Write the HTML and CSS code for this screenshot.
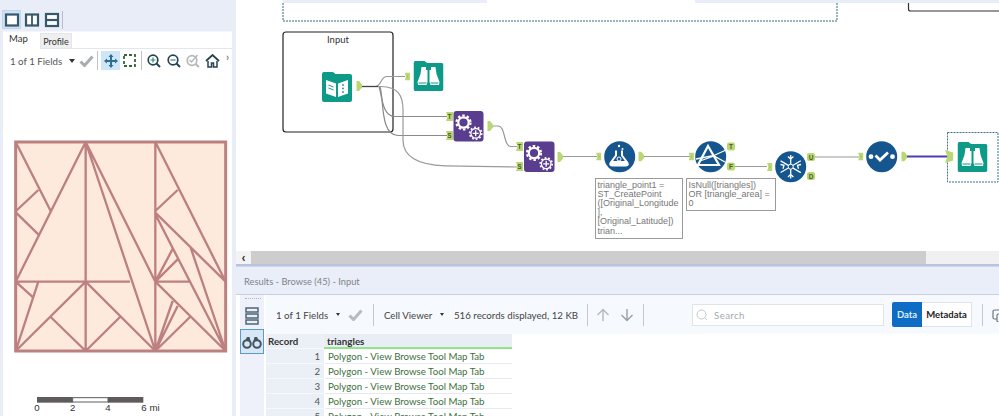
FILE: index.html
```html
<!DOCTYPE html>
<html lang="en">
<head>
<meta charset="utf-8">
<title>Results - Browse (45) - Input</title>
<link rel="stylesheet" href="styles.css">
</head>
<body>
<svg class="defs" width="0" height="0">
  <defs>
    <symbol id="folder" viewBox="0 0 30 30"><path fill="#0d9a88" d="M2 0H11L13.500 2H28a2 2 0 0 1 2 2V28a2 2 0 0 1-2 2H2a2 2 0 0 1-2-2V2a2 2 0 0 1 2-2z"/></symbol>
    <symbol id="bino" viewBox="0 0 30 30"><path fill="#fff" d="M8 6h4.500v3h1.500v12l-1 3H4.500L4 21l3-8zM22 6h-4.500v3H16v12l1 3h8.500l.5-3-3-8z"/><path fill="#0d9a88" d="M5 21.500h8v1H5zM17 21.500h8v1h-8z"/></symbol>
    <symbol id="gears" viewBox="0 0 30 30">
      <circle cx="10" cy="11.500" r="5.200" fill="none" stroke="#fff" stroke-width="2.200"/>
      <circle cx="10" cy="11.500" r="7" fill="none" stroke="#fff" stroke-width="2.200" stroke-dasharray="2.500 2"/>
      <circle cx="22.200" cy="22.300" r="7.200" fill="#5a3d8e"/>
      <circle cx="22.200" cy="22.300" r="4.800" fill="none" stroke="#fff" stroke-width="1.300"/>
      <circle cx="22.200" cy="22.300" r="6" fill="none" stroke="#fff" stroke-width="1.700" stroke-dasharray="1.800 1.900"/>
      <path d="M22.200 19.300v6M19.200 22.300h6" stroke="#fff" stroke-width="1.300"/>
    </symbol>
    <symbol id="in" viewBox="0 0 6 9"><path fill="#b9d772" d="M0 0H6V9H0L1.500 4.500z"/><path d="M2.500 3.500l1.500 1-1.500 1" fill="none" stroke="#8fae50" stroke-width=".6"/></symbol>
    <symbol id="out" viewBox="0 0 6 10"><path fill="#b9d772" d="M.500 0H3L6 3.500V6.500L3 10H.500z"/></symbol>
  </defs>
</svg>
<div class="app">
  <aside class="side">
    <div class="layouts">
      <button class="lbtn on"><svg width="16" height="16" viewBox="0 0 16 16"><rect x="2" y="2.500" width="12" height="11" fill="#fff" stroke="#36586a" stroke-width="2.200"/></svg></button>
      <button class="lbtn"><svg width="16" height="16" viewBox="0 0 16 16"><rect x="2" y="2.500" width="12" height="11" fill="#fff" stroke="#36586a" stroke-width="2.200"/><path d="M8 2.500v11" stroke="#36586a" stroke-width="1.800"/></svg></button>
      <button class="lbtn"><svg width="16" height="16" viewBox="0 0 16 16"><rect x="2" y="2" width="12" height="12" fill="#fff" stroke="#36586a" stroke-width="2.200"/><path d="M2 8h12" stroke="#36586a" stroke-width="2.200"/></svg></button>
      <span class="lsep"></span>
    </div>
    <div class="panel">
      <div class="tabs"><span class="tab active">Map</span><span class="tab">Profile</span></div>
      <div class="maptools">
        <span class="fields">1 of 1 Fields</span>
        <span class="caret"></span>
        <svg class="ico check" width="15" height="12" viewBox="0 0 15 12"><path d="M1.500 6.500l4 4 8-9" fill="none" stroke="#a9adb0" stroke-width="3"/></svg>
        <span class="vsep"></span>
        <span class="movebtn"><svg width="14" height="14" viewBox="0 0 14 14"><path fill="#2c6f90" d="M7 0l2.500 3H8v3h3V4.500L14 7l-3 2.500V8H8v3h1.500L7 14l-2.500-3H6V8H3v1.500L0 7l3-2.500V6h3V3H4.500z"/></svg></span>
        <svg class="ico" width="13" height="13" viewBox="0 0 13 13"><rect x="1" y="1" width="11" height="11" fill="none" stroke="#2f6a3c" stroke-width="1.800" stroke-dasharray="3 2"/></svg>
        <span class="vsep second"></span>
        <svg class="ico first" width="14" height="14" viewBox="0 0 14 14"><circle cx="6" cy="6" r="4.800" fill="none" stroke="#27434f" stroke-width="1.700"/><path d="M9.500 9.500L13 13" stroke="#27434f" stroke-width="2"/><path d="M3.500 6h5M6 3.500v5" stroke="#2c8a7a" stroke-width="1.200"/></svg>
        <svg class="ico gap6" width="14" height="14" viewBox="0 0 14 14"><circle cx="6" cy="6" r="4.800" fill="none" stroke="#27434f" stroke-width="1.700"/><path d="M9.500 9.500L13 13" stroke="#27434f" stroke-width="2"/><path d="M3.500 6h5" stroke="#2c8a7a" stroke-width="1.200"/></svg>
        <svg class="ico gap5" width="14" height="14" viewBox="0 0 14 14"><circle cx="6" cy="6.500" r="4.800" fill="none" stroke="#b5b8ba" stroke-width="1.700"/><path d="M9.500 10L13 13" stroke="#b5b8ba" stroke-width="2"/><path d="M3.500 6l2 2 6-7" fill="none" stroke="#b5b8ba" stroke-width="1.500"/></svg>
        <svg class="ico gap5" width="15" height="14" viewBox="0 0 15 14"><path d="M1 7l6.500-6L14 7" fill="none" stroke="#27434f" stroke-width="1.800"/><path d="M3 7v6h3.500V9h2v4H12V7" fill="none" stroke="#27434f" stroke-width="1.500"/></svg>
        <span class="more">›</span>
      </div>
      <svg class="map" width="229" height="286" viewBox="9 0 687 858">
        <rect x="47" y="33" width="630" height="627" fill="#fdeadd" stroke="#bd8080" stroke-width="9"/>
        <path fill="none" stroke="#bd8080" stroke-width="7" d="M257 33V660M466 33V660M47 452H390M466 452H570M47 33L152 240M115 177L48 240M48 245L115 310M257 33L47 452M47 452L100 500M115 452L47 660M47 660L257 452L466 660M152 558L257 660M360 558L257 660M257 33L466 452M257 33L466 660M466 33L677 452M533 177L466 240M466 245L677 452M466 250L677 660M520 350L466 452M533 385L466 452M572 350L677 660M466 452L677 660M518 510L466 660M533 525L466 660M570 558L466 660"/>
        <rect x="111" y="798" width="107" height="17" fill="#5f5a5c"/>
        <rect x="218" y="800" width="106" height="13" fill="#fff" stroke="#5f5a5c" stroke-width="3"/>
        <rect x="324" y="798" width="106" height="17" fill="#5f5a5c"/>
        <g class="scale">
          <text x="111" y="840" text-anchor="middle">0</text>
          <text x="218" y="840" text-anchor="middle">2</text>
          <text x="324" y="840" text-anchor="middle">4</text>
          <text x="424" y="840">6 mi</text>
        </g>
      </svg>
    </div>
  </aside>
  <main class="main">
    <div class="canvas">
      <svg class="flow" width="763" height="251" viewBox="236 0 763 251">
        <rect x="283" y="0" width="204" height="3" fill="#e9edf7"/>
        <rect x="695" y="0" width="304" height="3" fill="#e9edf7"/>
        <path d="M283 3V21H837V3" fill="none" stroke="#2f6f78" stroke-width="1" stroke-dasharray="2 1"/>
        <path d="M908.500 3V9a2 2 0 0 0 2 2H999" fill="none" stroke="#333" stroke-width="1.200"/>
        <rect x="283" y="32" width="110" height="100" rx="3" fill="#fff" stroke="#222" stroke-width="1.200"/>
        <text class="cap" x="338" y="43" text-anchor="middle">Input</text>

        <g fill="none" stroke="#9a9a9a" stroke-width="1.200">
          <path d="M361 86.500H375C382 86.500 380 76.500 387 76.500H405"/>
          <path d="M361 86.500H379C382 95 382 116.500 395 116.500H447" stroke="#8a8a8a"/>
          <path d="M361 86.500H380C384 100 380 135 398 135.500H447" stroke="#8a8a8a"/>
          <path d="M361 86.500H381C398 87 403 95 403 110V140C403 158 420 165 445 165.800L517 167"/>
          <path d="M492 126H498C506 126 503 146.500 511 146.500H517"/>
          <path d="M563 156.500H597M644 156.500H690M735 166.500H767M815 157H859"/>
        </g>
        <path d="M361 86.500H378" fill="none" stroke="#444" stroke-width="1.300"/>
        <path d="M906 156.500H947" fill="none" stroke="#4c3fb0" stroke-width="2"/>

        <use href="#folder" x="322" y="72" width="30" height="30"/>
        <path fill="#fff" d="M326 80l10 3.500V97l-10-3.500zM348 80l-10 3.500V97l10-3.500z"/>
        <path d="M328.500 85l5 2M328.500 88l5 2" stroke="#0d9a88" stroke-width="1"/>
        <circle cx="343" cy="85" r=".9" fill="#0d9a88"/><circle cx="343" cy="88.500" r=".9" fill="#0d9a88"/><circle cx="343" cy="92" r=".9" fill="#0d9a88"/>
        <use href="#out" x="356" y="81" width="6" height="10"/>

        <use href="#in" x="404.500" y="72.500" width="5.500" height="8"/>
        <use href="#folder" x="413.500" y="61" width="30" height="30"/>
        <use href="#bino" x="413.500" y="61" width="30" height="30"/>

        <rect x="453.500" y="111" width="30" height="30.500" rx="3" fill="#5a3d8e"/>
        <use href="#gears" x="453.500" y="111" width="30" height="30"/>
        <path fill="#b9d772" d="M446 112h7v9h-7l1.500-4.500zM446 131h7v9h-7l1.500-4.500z"/>
        <text class="anc" x="449.500" y="119">T</text><text class="anc" x="449.500" y="138">S</text>
        <use href="#out" x="487" y="121" width="6" height="10"/>

        <rect x="524" y="141.500" width="30.500" height="30.500" rx="3" fill="#5a3d8e"/>
        <use href="#gears" x="524" y="141.500" width="30" height="30"/>
        <path fill="#b9d772" d="M516 142h7v9h-7l1.500-4.500zM516 162h7v9h-7l1.500-4.500z"/>
        <text class="anc" x="519.500" y="149">T</text><text class="anc" x="519.500" y="169">S</text>
        <use href="#out" x="557" y="152" width="6" height="10"/>

        <use href="#in" x="596" y="152.500" width="5.500" height="8"/>
        <circle cx="619.700" cy="156.700" r="15.500" fill="#15568f"/>
        <path fill="none" stroke="#fff" stroke-width="2" d="M616 150.500v5l-5.500 7.500q-1 2.500 2 2.500h13q3 0 2-2.500l-5.500-7.500v-5"/>
        <path fill="#fff" d="M612 161h15l1.500 3.500-1 1.500h-16l-1-1.500z"/>
        <circle cx="619" cy="159" r="2" fill="none" stroke="#fff" stroke-width="1"/>
        <circle cx="619" cy="146" r="1.200" fill="#fff"/><circle cx="622.500" cy="149" r="1" fill="#fff"/>
        <use href="#out" x="638" y="151.500" width="6" height="10"/>

        <use href="#in" x="688.500" y="152.500" width="5.500" height="8"/>
        <circle cx="710.700" cy="156.700" r="15.500" fill="#15568f"/>
        <path d="M708 146L719 165H698Z" fill="none" stroke="#fff" stroke-width="2.200"/>
        <path d="M696 159L714 155.500L726 150M700 161L714 156L725 162" fill="none" stroke="#fff" stroke-width="1.300"/>
        <rect x="727" y="142.500" width="8" height="8" rx="2" fill="#b9d772"/><text class="anc" x="731" y="149">T</text>
        <rect x="727" y="162.500" width="8" height="8" rx="2" fill="#b9d772"/><text class="anc" x="731" y="169">F</text>

        <use href="#in" x="767" y="163" width="5.500" height="8"/>
        <circle cx="790.700" cy="166.700" r="15.500" fill="#15568f"/>
        <path fill="none" stroke="#fff" stroke-width="1.300" d="M790.700 155v23.400M780.600 160.900l20.200 11.700M780.600 172.500l20.200-11.700M788 156.500l2.700 2.700 2.700-2.700M788 177l2.700-2.700 2.700 2.700M780.500 164.500l3.500.8-1 3.500M801 164.500l-3.500.8 1 3.500"/>
        <circle cx="790.700" cy="166.700" r="2.500" fill="#15568f" stroke="#fff" stroke-width="1"/>
        <rect x="807" y="153" width="8" height="8" rx="2" fill="#b9d772"/><text class="anc" x="811" y="159.500">U</text>
        <rect x="807" y="172" width="8" height="8" rx="2" fill="#b9d772"/><text class="anc" x="811" y="178.500">D</text>

        <use href="#in" x="858" y="152.500" width="5.500" height="8"/>
        <circle cx="881.700" cy="156.700" r="15.500" fill="#15568f"/>
        <circle cx="871" cy="156.700" r="2.400" fill="#fff"/><circle cx="892.500" cy="156.700" r="2.400" fill="#fff"/>
        <path d="M875.500 155.500l4.500 4.500 8-7.500" fill="none" stroke="#fff" stroke-width="2.800"/>
        <use href="#out" x="901" y="151.500" width="6" height="10"/>

        <rect x="947.500" y="132.500" width="50.500" height="49.500" fill="none" stroke="#3a6f8a" stroke-width="1" stroke-dasharray="2 1"/>
        <use href="#folder" x="957.500" y="142" width="30" height="30"/>
        <use href="#bino" x="957.500" y="142" width="30" height="30"/>
        <path fill="#b9d772" d="M945 150l8 2.500v8l-8 2.500 2.500-6.500z"/>
      </svg>
      <div class="note first">triangle_point1 =<br>ST_CreatePoint<br>([Original_Longitude<br>],<br>[Original_Latitude])<br>trian...</div>
      <div class="note second">IsNull([triangles])<br>OR [triangle_area] =<br>0</div>
    </div>
    <div class="hscroll"><span class="sarrow">‹</span><span class="sthumb"></span></div>
    <div class="results">
      <div class="rtitle">Results - Browse (45) - Input</div>
      <div class="rbody">
        <div class="rside">
          <span class="grip"></span>
          <svg class="stack" width="16" height="20" viewBox="0 0 16 20"><g fill="#e9eef7" stroke="#4e6675" stroke-width="1.500"><rect x="2" y="2" width="12" height="4"/><rect x="2" y="8" width="12" height="4"/><rect x="2" y="14" width="12" height="4"/></g></svg>
          <span class="binobtn"><svg width="20" height="14" viewBox="0 0 20 14"><g fill="none" stroke="#45555f" stroke-width="2"><circle cx="5" cy="9" r="3.800"/><circle cx="15" cy="9" r="3.800"/></g><path d="M3 6l2-4h2.500l1 4M17 6l-2-4h-2.500l-1 4" fill="#45555f"/></svg></span>
        </div>
        <div class="rmain">
          <div class="rtools">
            <span class="rtext fieldsel">1 of 1 Fields</span><span class="caret rcaret"></span>
            <svg class="rcheck" width="15" height="12" viewBox="0 0 15 12"><path d="M1.500 6.500l4 4 8-9" fill="none" stroke="#b3bcc4" stroke-width="3"/></svg>
            <span class="rsep sepa"></span>
            <span class="rtext cellsel">Cell Viewer</span><span class="caret rcaret"></span>
            <span class="rtext recs">516 records displayed, 12 KB</span>
            <span class="rsep sepb"></span>
            <svg class="arrow up" width="14" height="14" viewBox="0 0 14 14"><path d="M7 13V1.500M1.500 7L7 1.500 12.500 7" fill="none" stroke="#b4b9bf" stroke-width="1.400"/></svg>
            <svg class="arrow down" width="14" height="14" viewBox="0 0 14 14"><path d="M7 1V12.500M1.500 7L7 12.500 12.500 7" fill="none" stroke="#9aa0a6" stroke-width="1.400"/></svg>
            <span class="rsep sepc"></span>
            <span class="search"><svg width="12" height="12" viewBox="0 0 12 12"><circle cx="5.500" cy="5.500" r="4.500" fill="none" stroke="#c2c7cc" stroke-width="1"/><path d="M9 9l2 2" stroke="#c2c7cc"/></svg><span class="stext">Search</span></span>
            <span class="seg"><span class="segb on">Data</span><span class="segb">Metadata</span></span>
            <span class="rsep sepd"></span>
            <svg class="copy" width="12" height="14" viewBox="0 0 12 14"><rect x="1" y="2" width="8" height="9" rx="1.500" fill="none" stroke="#6d7680" stroke-width="1.200"/><rect x="5" y="6" width="8" height="8" rx="1.500" fill="#fff" stroke="#6d7680" stroke-width="1.200"/></svg>
          </div>
          <div class="grid">
            <div class="hd rec">Record</div><div class="hd col">triangles</div>
            <div class="rec num">1</div><div class="cell">Polygon - View Browse Tool Map Tab</div>
            <div class="rec num">2</div><div class="cell">Polygon - View Browse Tool Map Tab</div>
            <div class="rec num">3</div><div class="cell">Polygon - View Browse Tool Map Tab</div>
            <div class="rec num">4</div><div class="cell">Polygon - View Browse Tool Map Tab</div>
            <div class="rec num">5</div><div class="cell">Polygon - View Browse Tool Map Tab</div>
          </div>
        </div>
      </div>
    </div>
  </main>
</div>
</body>
</html>
```

FILE: styles.css
```css
* { box-sizing: border-box; }
html, body { margin: 0; height: 100%; overflow: hidden; background: #fff; }
body { font-family: Lato, "Open Sans", sans-serif; color: #444; }
.defs { position: absolute; }
svg { display: block; flex: none; }
.app { display: flex; width: 999px; height: 416px; }

/* left column */
.side { width: 236px; flex: none; background: #e8edf7; display: flex; flex-direction: column; padding-right: 4px; padding-left: 3px; }
.layouts { height: 31px; display: flex; align-items: flex-end; padding-bottom: 2px; gap: 1px; margin-left: -1px; flex: none; }
.lbtn { width: 19px; height: 19px; padding: 0; border: 0; background: transparent; display: flex; align-items: center; justify-content: center; }
.lbtn.on { background: #cfe2f5; border: 1px solid #bcd6ee; }
.lsep { width: 1px; height: 18px; background: #b6bdc6; }
.panel { flex: 1; background: #fff; display: flex; flex-direction: column; min-height: 0; border-top: 1px solid #f4f6fb; }
.tabs { height: 17px; display: flex; align-items: flex-end; border-bottom: 1px solid #e3e6ec; flex: none; }
.tab { font-size: 9px; line-height: 15px; height: 15px; width: 32px; text-align: center; background: #efefef; color: #333; border: 1px solid #e3e6ec; border-bottom: 0; }
.tab.active { font-size: 9.500px; background: #fff; height: 17px; width: 37px; padding-left: 6px; text-align: left; border: 0; line-height: 14px; margin-bottom: -1px; }
.maptools { height: 23px; display: flex; align-items: center; padding-left: 7px; flex: none; }
.fields { font-size: 9.700px; color: #555; width: 59px; white-space: nowrap; }
.caret { width: 0; height: 0; border: 3px solid transparent; border-top: 4px solid #333; border-bottom: 0; flex: none; }
.ico { margin-left: 3px; }
.ico.check { margin-left: 4px; }
.ico.first { margin-left: 0; }
.ico.gap6 { margin-left: 6px; }
.ico.gap5 { margin-left: 5px; }
.vsep { width: 1px; height: 19px; background: #bfc4c9; margin-left: 3px; flex: none; }
.vsep.second { margin: 0 5px 0 5px; }
.movebtn { width: 19px; height: 19px; background: #cfe5f8; margin-left: 3px; display: flex; align-items: center; justify-content: center; flex: none; }
.more { font-size: 11px; margin-left: 6px; line-height: 1; align-self: flex-start; color: #555; margin-top: 2px; }
.map { flex: none; margin-top: 59px; }
.scale text { font-family: "Liberation Sans", sans-serif; font-size: 29px; fill: #333; }

/* right column */
.main { flex: 1; min-width: 0; display: flex; flex-direction: column; }
.canvas { position: relative; height: 251px; background: #fff; flex: none; }
.flow { position: absolute; left: 0; top: 0; }
.cap { font-family: Lato, sans-serif; font-size: 9.500px; fill: #333; }
.anc { font-family: "Liberation Sans", sans-serif; font-size: 6.500px; font-weight: 700; fill: #4c5a2a; text-anchor: middle; }
.note { position: absolute; border: 1px solid #9a9a9a; background: #fff; font-family: "Liberation Sans", sans-serif; font-size: 9px; line-height: 9.200px; color: #777; padding: 1.500px 0 0 1.500px; white-space: nowrap; overflow: hidden; }
.note.first { left: 359px; top: 178px; width: 88px; height: 61px; }
.note.second { left: 450px; top: 178px; width: 90px; height: 33px; }
.hscroll { height: 13px; background: #f0f0f0; display: flex; flex: none; }
.sarrow { width: 15px; background: #f3f3f3; font-size: 14px; line-height: 11px; font-weight: 700; text-align: center; color: #222; }
.sthumb { width: 675px; background: #cdcdcd; }
.results { flex: 1; min-height: 0; display: flex; flex-direction: column; border-top: 2px solid #bac2e0; }
.rtitle { height: 29px; flex: none; background: #e9eef8; border-top: 1px solid #cfd5ea; border-bottom: 1px solid #c9cee4; padding-left: 8px; font-size: 9.300px; line-height: 30px; color: #808488; white-space: nowrap; overflow: hidden; }
.rbody { flex: 1; min-height: 0; display: flex; }
.rside { width: 30px; flex: none; padding-left: 4px; display: flex; flex-direction: column; position: relative; }
.rside::before { content: ""; position: absolute; left: 4px; top: 0; bottom: 0; width: 24px; background: #eef1f9; }
.grip { position: relative; height: 4px; width: 16px; margin: 3px 0 0 5px; border-top: 1px dotted #b0b6c0; flex: none; }
.stack { position: relative; margin: 4px 0 3px 4px; }
.binobtn { position: relative; width: 24px; height: 25px; border: 1px solid #5a9bc8; background: #d7e7f6; display: flex; align-items: center; justify-content: center; }
.rmain { flex: 1; min-width: 0; display: flex; flex-direction: column; }
.rtools { height: 39px; flex: none; background: #f6f9fd; display: flex; align-items: center; white-space: nowrap; overflow: hidden; }
.rtools > * { flex: none; }
.rtext { font-size: 9.700px; color: #444; }
.fieldsel { margin-left: 10px; width: 56px; }
.cellsel { width: 52px; }
.rcaret { margin-left: 4px; border-left-width: 2.500px; border-right-width: 2.500px; border-top-width: 3px; }
.rcheck { margin-left: 8px; }
.rsep { width: 1px; height: 22px; background: #c4c9cf; }
.sepa { margin: 0 10px 0 10px; }
.recs { margin-left: 10px; width: 124px; }
.sepb { margin-left: 9px; }
.arrow.up { margin-left: 8px; }
.arrow.down { margin-left: 10px; }
.sepc { margin-left: 9px; }
.search { width: 192px; height: 22px; margin-left: 48px; background: #fff; border: 1px solid #dfe3ea; display: flex; align-items: center; padding-left: 3px; }
.stext { margin-left: 6px; font-size: 9.700px; color: #a6a9ad; letter-spacing: .4px; }
.seg { display: flex; height: 25px; margin-left: 8px; }
.segb { width: 50px; background: #fff; border: 1px solid #dfe3ea; border-left: 0; font-size: 9.500px; font-weight: 700; color: #222; line-height: 23px; text-align: center; }
.segb.on { width: 30px; background: #0e6cc4; color: #dfeefc; border: 0; border-radius: 2px 0 0 2px; line-height: 25px; }
.sepd { margin-left: 10px; }
.copy { margin-left: 9px; }
.grid { display: grid; grid-template-columns: 58px 188px; grid-auto-rows: 15px; width: 246px; }
.hd { font-size: 9.800px; line-height: 14px; font-weight: 700; color: #333; background: #e9eef5; }
.rec { background: #ebeff6; padding-left: 2px; border-bottom: 1px solid #f7f8fb; font-size: 9.700px; }
.hd.rec { padding-left: 2px; }
.hd.col { padding-left: 3px; border-bottom: 2px solid #90e48c; }
.num { text-align: right; padding-right: 4px; color: #555; line-height: 15px; }
.cell { background: #fff; padding-left: 3px; margin-left: 1px; border-bottom: 1px solid #e6eaf1; font-size: 9.700px; line-height: 15px; color: #3d6f3d; white-space: nowrap; overflow: hidden; }
```
